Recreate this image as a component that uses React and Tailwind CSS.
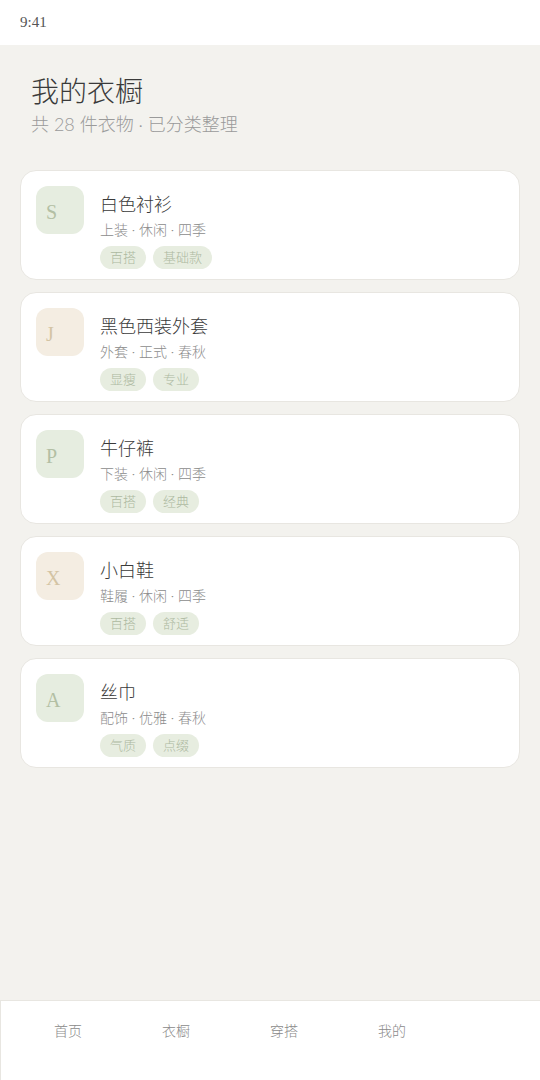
const items = [
  { letter: 'S', name: '白色衬衫', meta: '上装 · 休闲 · 四季', tags: ['百搭', '基础款'], tone: 'green' },
  { letter: 'J', name: '黑色西装外套', meta: '外套 · 正式 · 春秋', tags: ['显瘦', '专业'], tone: 'beige' },
  { letter: 'P', name: '牛仔裤', meta: '下装 · 休闲 · 四季', tags: ['百搭', '经典'], tone: 'green' },
  { letter: 'X', name: '小白鞋', meta: '鞋履 · 休闲 · 四季', tags: ['百搭', '舒适'], tone: 'beige' },
  { letter: 'A', name: '丝巾', meta: '配饰 · 优雅 · 春秋', tags: ['气质', '点缀'], tone: 'green' },
];

const sans = { fontFamily: 'Lato, "Noto Sans CJK SC", sans-serif' };

function ItemCard({ item }) {
  const avatar =
    item.tone === 'green'
      ? 'bg-[#e6ede0] text-[#b3bfa4]'
      : 'bg-[#f4ede2] text-[#d3c4a4]';
  return (
    <div className="flex gap-4 rounded-2xl border border-[#e8e6e1] bg-white px-[15px] pt-[15px] pb-[10px]">
      <div
        className={`flex h-12 w-12 shrink-0 items-center rounded-xl pt-[4px] pl-[10px] font-['Liberation_Serif',serif] text-[20px] ${avatar}`}
      >
        {item.letter}
      </div>
      <div className="flex flex-col">
        <div className="mt-[4px] text-[18px] leading-[28px] font-light text-[#3a3a3a]">{item.name}</div>
        <div className="text-[14px] leading-[24px] font-light text-[#8c8c8c]">{item.meta}</div>
        <div className="mt-[4px] flex gap-[7px]">
          {item.tags.map((t) => (
            <span
              key={t}
              className="rounded-full bg-[#e7ede0] px-[10px] text-[13px] leading-[23px] font-light text-[#adb9a0]"
            >
              {t}
            </span>
          ))}
        </div>
      </div>
    </div>
  );
}

export default function App() {
  return (
    <div className="flex h-[1080px] w-[540px] flex-col bg-[#f3f2ee]" style={sans}>
      {/* Status bar */}
      <div className="flex h-[45px] items-center bg-white px-5 font-['Liberation_Serif',serif] text-[15px] text-[#555]">
        9:41
      </div>

      {/* Header */}
      <div className="px-[31px] pt-[26px]">
        <h1 className="text-[28px] leading-[40px] font-light text-[#3a3a3a]">我的衣橱</h1>
        <p className="text-[18px] leading-[26px] font-light text-[#9a9a9a]">共 28 件衣物 · 已分类整理</p>
      </div>

      {/* List */}
      <div className="mt-[33px] flex flex-1 flex-col gap-3 px-5">
        {items.map((item) => (
          <ItemCard key={item.letter} item={item} />
        ))}
      </div>

      {/* Bottom nav */}
      <div className="flex h-[80px] border-t border-l border-[#e8e6e1] bg-white px-[13px] pt-[18px]">
        {['首页', '衣橱', '穿搭', '我的'].map((label) => (
          <div key={label} className="w-[108px] text-center text-[14px] leading-[24px] font-light text-[#8a8a8a]">
            {label}
          </div>
        ))}
      </div>
    </div>
  );
}
